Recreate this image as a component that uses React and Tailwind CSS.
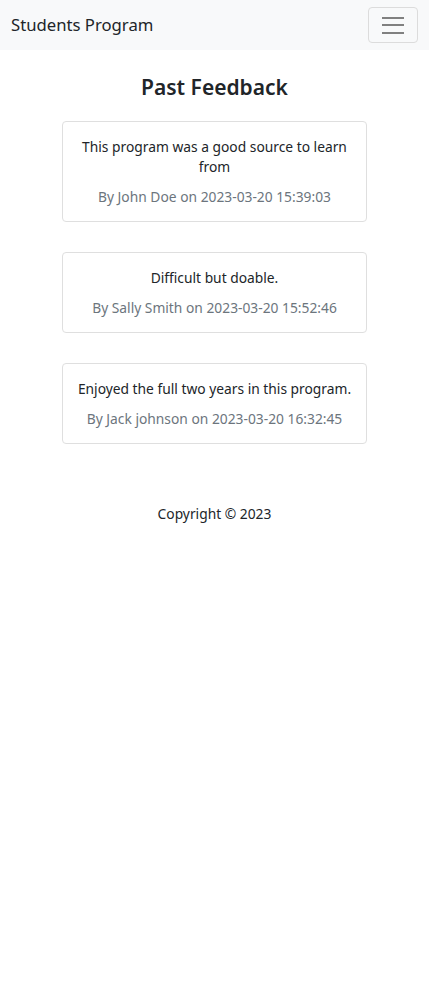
const feedback = [
  { text: 'This program was a good source to learn from', by: 'John Doe', at: '2023-03-20 15:39:03' },
  { text: 'Difficult but doable.', by: 'Sally Smith', at: '2023-03-20 15:52:46' },
  { text: 'Enjoyed the full two years in this program.', by: 'Jack johnson', at: '2023-03-20 16:32:45' },
];

function FeedbackCard({ item }) {
  return (
    <div className="rounded-[4px] border border-[#dfdfdf] bg-white px-[12px] pt-[15px] pb-[14px] text-center text-[13.8px] leading-[20px]">
      <p className="text-[#212529]">{item.text}</p>
      <p className="mt-[10px] text-[#6c757d]">
        By {item.by} on {item.at}
      </p>
    </div>
  );
}

export default function App() {
  return (
    <div className="min-h-[997px] bg-white text-[#212529]" style={{ fontFamily: '"Segoe UI", "Noto Sans", sans-serif' }}>
      <nav className="flex h-[50px] items-center justify-between bg-[#f8f9fa] px-[11px]">
        <span className="text-[16.7px] leading-[24px] text-[#212529]">Students Program</span>
        <button className="flex h-[36px] w-[50px] flex-col items-center justify-center gap-[5.5px] rounded-[4px] border border-[#dcdcdc]">
          <span className="h-[2px] w-[22px] bg-[#808080]" />
          <span className="h-[2px] w-[22px] bg-[#808080]" />
          <span className="h-[2px] w-[22px] bg-[#808080]" />
        </button>
      </nav>

      <main className="flex flex-col items-center">
        <h3 className="mt-[22px] text-[21px] font-semibold leading-[30px]">Past Feedback</h3>
        <div className="mt-[19px] flex w-[305px] flex-col gap-[30px]">
          {feedback.map((f) => (
            <FeedbackCard key={f.by} item={f} />
          ))}
        </div>
        <footer className="mt-[60px] text-[13.8px] leading-[20px]">Copyright © 2023</footer>
      </main>
    </div>
  );
}
